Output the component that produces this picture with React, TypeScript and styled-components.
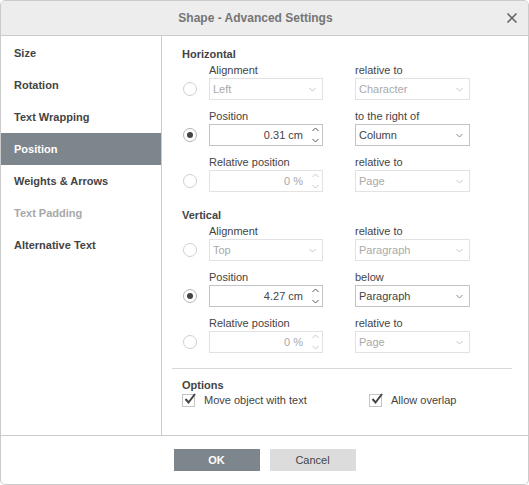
import React from "react";
import styled, { createGlobalStyle } from "styled-components";

const Global = createGlobalStyle`
  html, body { margin: 0; padding: 0; background: #fff; }
  body { font-family: "Liberation Sans", Arial, sans-serif; font-size: 11px; color: #444; }
  * { box-sizing: border-box; }
`;

const Dialog = styled.div`
  width: 529px;
  height: 485px;
  border: 1px solid #cbcbcb;
  border-radius: 5px;
  overflow: hidden;
  display: flex;
  flex-direction: column;
  background: #fff;
`;

const Header = styled.div`
  height: 35px;
  flex: none;
  background: #ededed;
  border-bottom: 1px solid #cbcbcb;
  display: flex;
  align-items: center;
  justify-content: center;
  padding-right: 18px;
  position: relative;
`;

const Title = styled.div`
  font-size: 12px;
  font-weight: bold;
  color: #757575;
`;

const Close = styled.div`
  position: absolute;
  right: 10px;
  top: 11px;
  width: 12px;
  height: 12px;
  display: flex;
`;

const Body = styled.div`
  flex: 1;
  display: flex;
  min-height: 0;
`;

const Sidebar = styled.div`
  width: 161px;
  flex: none;
  border-right: 1px solid #cbcbcb;
  padding-top: 1px;
`;

const NavItem = styled.div<{ $active?: boolean; $disabled?: boolean }>`
  height: 32px;
  line-height: 32px;
  padding-left: 13px;
  font-weight: bold;
  font-size: 11px;
  background: ${(p) => (p.$active ? "#7e868d" : "transparent")};
  color: ${(p) => (p.$active ? "#fff" : p.$disabled ? "#a8a8a8" : "#444")};
`;

const Content = styled.div`
  flex: 1;
  padding: 11px 16px 0 10px;
  display: flex;
  flex-direction: column;
`;

const Section = styled.div<{ $gap?: number }>`
  padding-left: 10px;
  margin-top: ${(p) => p.$gap ?? 0}px;
`;

const Heading = styled.div<{ $mb?: number }>`
  font-weight: bold;
  line-height: 14px;
  margin-bottom: ${(p) => p.$mb ?? 2}px;
  color: #444;
`;

const Row = styled.div`
  display: grid;
  grid-template-columns: 27px 114px 32px 115px;
  grid-template-rows: 14px 22px;
  row-gap: 1px;
  margin-bottom: 9px;
  align-items: center;
`;

const Label = styled.div<{ $col: number }>`
  grid-column: ${(p) => p.$col};
  grid-row: 1;
  line-height: 14px;
  color: #444;
  white-space: nowrap;
`;

const RadioCell = styled.div`
  grid-column: 1;
  grid-row: 2;
  padding-left: 1px;
  display: flex;
  align-items: center;
`;

const Radio = styled.div<{ $checked?: boolean }>`
  width: 14px;
  height: 14px;
  border-radius: 50%;
  border: 1px solid ${(p) => (p.$checked ? "#b5b5b5" : "#cfcfcf")};
  background: #fff;
  display: flex;
  align-items: center;
  justify-content: center;
  &::after {
    content: "";
    display: ${(p) => (p.$checked ? "block" : "none")};
    width: 6px;
    height: 6px;
    border-radius: 50%;
    background: #444;
  }
`;

const Field = styled.div<{ $col: number; $disabled?: boolean }>`
  grid-column: ${(p) => p.$col};
  grid-row: 2;
  height: 22px;
  border: 1px solid ${(p) => (p.$disabled ? "#e2e2e2" : "#c3c3c3")};
  background: #fff;
  display: flex;
  align-items: center;
  color: ${(p) => (p.$disabled ? "#a9a9a9" : "#444")};
  position: relative;
`;

const FieldText = styled.div<{ $right?: boolean }>`
  flex: 1;
  padding: ${(p) => (p.$right ? "0 19px 0 4px" : "0 4px 0 3px")};
  text-align: ${(p) => (p.$right ? "right" : "left")};
  font-size: 11px;
`;

const Caret = styled.div`
  width: 16px;
  display: flex;
  align-items: center;
  justify-content: center;
  padding-right: 4px;
`;

const Spin = styled.div`
  position: absolute;
  right: 3px;
  top: 2px;
  bottom: 2px;
  width: 8px;
  display: flex;
  flex-direction: column;
  justify-content: space-between;
  align-items: center;
`;

const Divider = styled.div`
  height: 1px;
  background: #d8d8d8;
  margin: 6px 0 9px 0;
`;

const Options = styled.div`
  padding-left: 10px;
`;

const OptionsRow = styled.div`
  display: flex;
`;

const CheckItem = styled.div<{ $w?: number }>`
  display: flex;
  align-items: center;
  width: ${(p) => (p.$w ? `${p.$w}px` : "auto")};
  height: 16px;
`;

const Box = styled.div`
  width: 13px;
  height: 13px;
  border: 1px solid #c3c3c3;
  background: #fff;
  position: relative;
  margin-right: 9px;
  flex: none;
`;

const Tick = styled.svg`
  position: absolute;
  left: 1px;
  top: -3px;
`;

const Footer = styled.div`
  height: 49px;
  flex: none;
  border-top: 1px solid #cbcbcb;
  display: flex;
  align-items: center;
  justify-content: center;
  gap: 10px;
`;

const Button = styled.div<{ $primary?: boolean }>`
  width: 86px;
  height: 22px;
  line-height: 22px;
  text-align: center;
  font-size: 11px;
  font-weight: ${(p) => (p.$primary ? "bold" : "normal")};
  background: ${(p) => (p.$primary ? "#7e868d" : "#dcdcdc")};
  color: ${(p) => (p.$primary ? "#fff" : "#444")};
`;

const ChevronDown = ({ light }: { light?: boolean }) => (
  <svg width="7" height="5" viewBox="0 0 7 5">
    <path d="M0.5 1 L3.5 4 L6.5 1" fill="none" stroke={light ? "#c4c4c4" : "#8a8a8a"} strokeWidth="1" />
  </svg>
);

const SpinArrows = ({ disabled }: { disabled?: boolean }) => {
  const c = disabled ? "#c8c8c8" : "#555";
  return (
    <Spin>
      <svg width="7" height="5" viewBox="0 0 7 5">
        <path d="M0.5 4 L3.5 1 L6.5 4" fill="none" stroke={c} strokeWidth="1" />
      </svg>
      <svg width="7" height="5" viewBox="0 0 7 5">
        <path d="M0.5 1 L3.5 4 L6.5 1" fill="none" stroke={c} strokeWidth="1" />
      </svg>
    </Spin>
  );
};

type RowSpec = {
  label: string;
  rel: string;
  value: string;
  relValue: string;
  checked: boolean;
  spin: boolean;
};

const PosRow = ({ r }: { r: RowSpec }) => {
  const dis = !r.checked;
  return (
    <Row>
      <Label $col={2}>{r.label}</Label>
      <Label $col={4}>{r.rel}</Label>
      <RadioCell>
        <Radio $checked={r.checked} />
      </RadioCell>
      <Field $col={2} $disabled={dis}>
        {r.spin ? (
          <>
            <FieldText $right>{r.value}</FieldText>
            <SpinArrows disabled={dis} />
          </>
        ) : (
          <>
            <FieldText>{r.value}</FieldText>
            <Caret>
              <ChevronDown light />
            </Caret>
          </>
        )}
      </Field>
      <Field $col={4} $disabled={dis}>
        <FieldText>{r.relValue}</FieldText>
        <Caret>
          <ChevronDown light={dis} />
        </Caret>
      </Field>
    </Row>
  );
};

const horizontal: RowSpec[] = [
  { label: "Alignment", rel: "relative to", value: "Left", relValue: "Character", checked: false, spin: false },
  { label: "Position", rel: "to the right of", value: "0.31 cm", relValue: "Column", checked: true, spin: true },
  { label: "Relative position", rel: "relative to", value: "0 %", relValue: "Page", checked: false, spin: true },
];

const vertical: RowSpec[] = [
  { label: "Alignment", rel: "relative to", value: "Top", relValue: "Paragraph", checked: false, spin: false },
  { label: "Position", rel: "below", value: "4.27 cm", relValue: "Paragraph", checked: true, spin: true },
  { label: "Relative position", rel: "relative to", value: "0 %", relValue: "Page", checked: false, spin: true },
];

const nav = [
  { t: "Size" },
  { t: "Rotation" },
  { t: "Text Wrapping" },
  { t: "Position", active: true },
  { t: "Weights & Arrows" },
  { t: "Text Padding", disabled: true },
  { t: "Alternative Text" },
];

const Check = () => (
  <Tick width="13" height="13" viewBox="0 0 13 13">
    <path d="M1.5 7 L4.5 10.5 L11 2" fill="none" stroke="#444" strokeWidth="2" />
  </Tick>
);

export default function App() {
  return (
    <>
      <Global />
      <Dialog>
        <Header>
          <Title>Shape - Advanced Settings</Title>
          <Close>
            <svg width="12" height="12" viewBox="0 0 12 12">
              <path d="M1.5 1.5 L10.5 10.5 M10.5 1.5 L1.5 10.5" stroke="#666" strokeWidth="1.6" />
            </svg>
          </Close>
        </Header>
        <Body>
          <Sidebar>
            {nav.map((n) => (
              <NavItem key={n.t} $active={n.active} $disabled={n.disabled}>
                {n.t}
              </NavItem>
            ))}
          </Sidebar>
          <Content>
            <Section>
              <Heading>Horizontal</Heading>
              {horizontal.map((r) => (
                <PosRow key={r.label} r={r} />
              ))}
            </Section>
            <Section $gap={7}>
              <Heading>Vertical</Heading>
              {vertical.map((r) => (
                <PosRow key={r.label} r={r} />
              ))}
            </Section>
            <Divider />
            <Options>
              <Heading $mb={0}>Options</Heading>
              <OptionsRow>
                <CheckItem $w={187}>
                  <Box>
                    <Check />
                  </Box>
                  Move object with text
                </CheckItem>
                <CheckItem>
                  <Box>
                    <Check />
                  </Box>
                  Allow overlap
                </CheckItem>
              </OptionsRow>
            </Options>
          </Content>
        </Body>
        <Footer>
          <Button $primary>OK</Button>
          <Button>Cancel</Button>
        </Footer>
      </Dialog>
    </>
  );
}
